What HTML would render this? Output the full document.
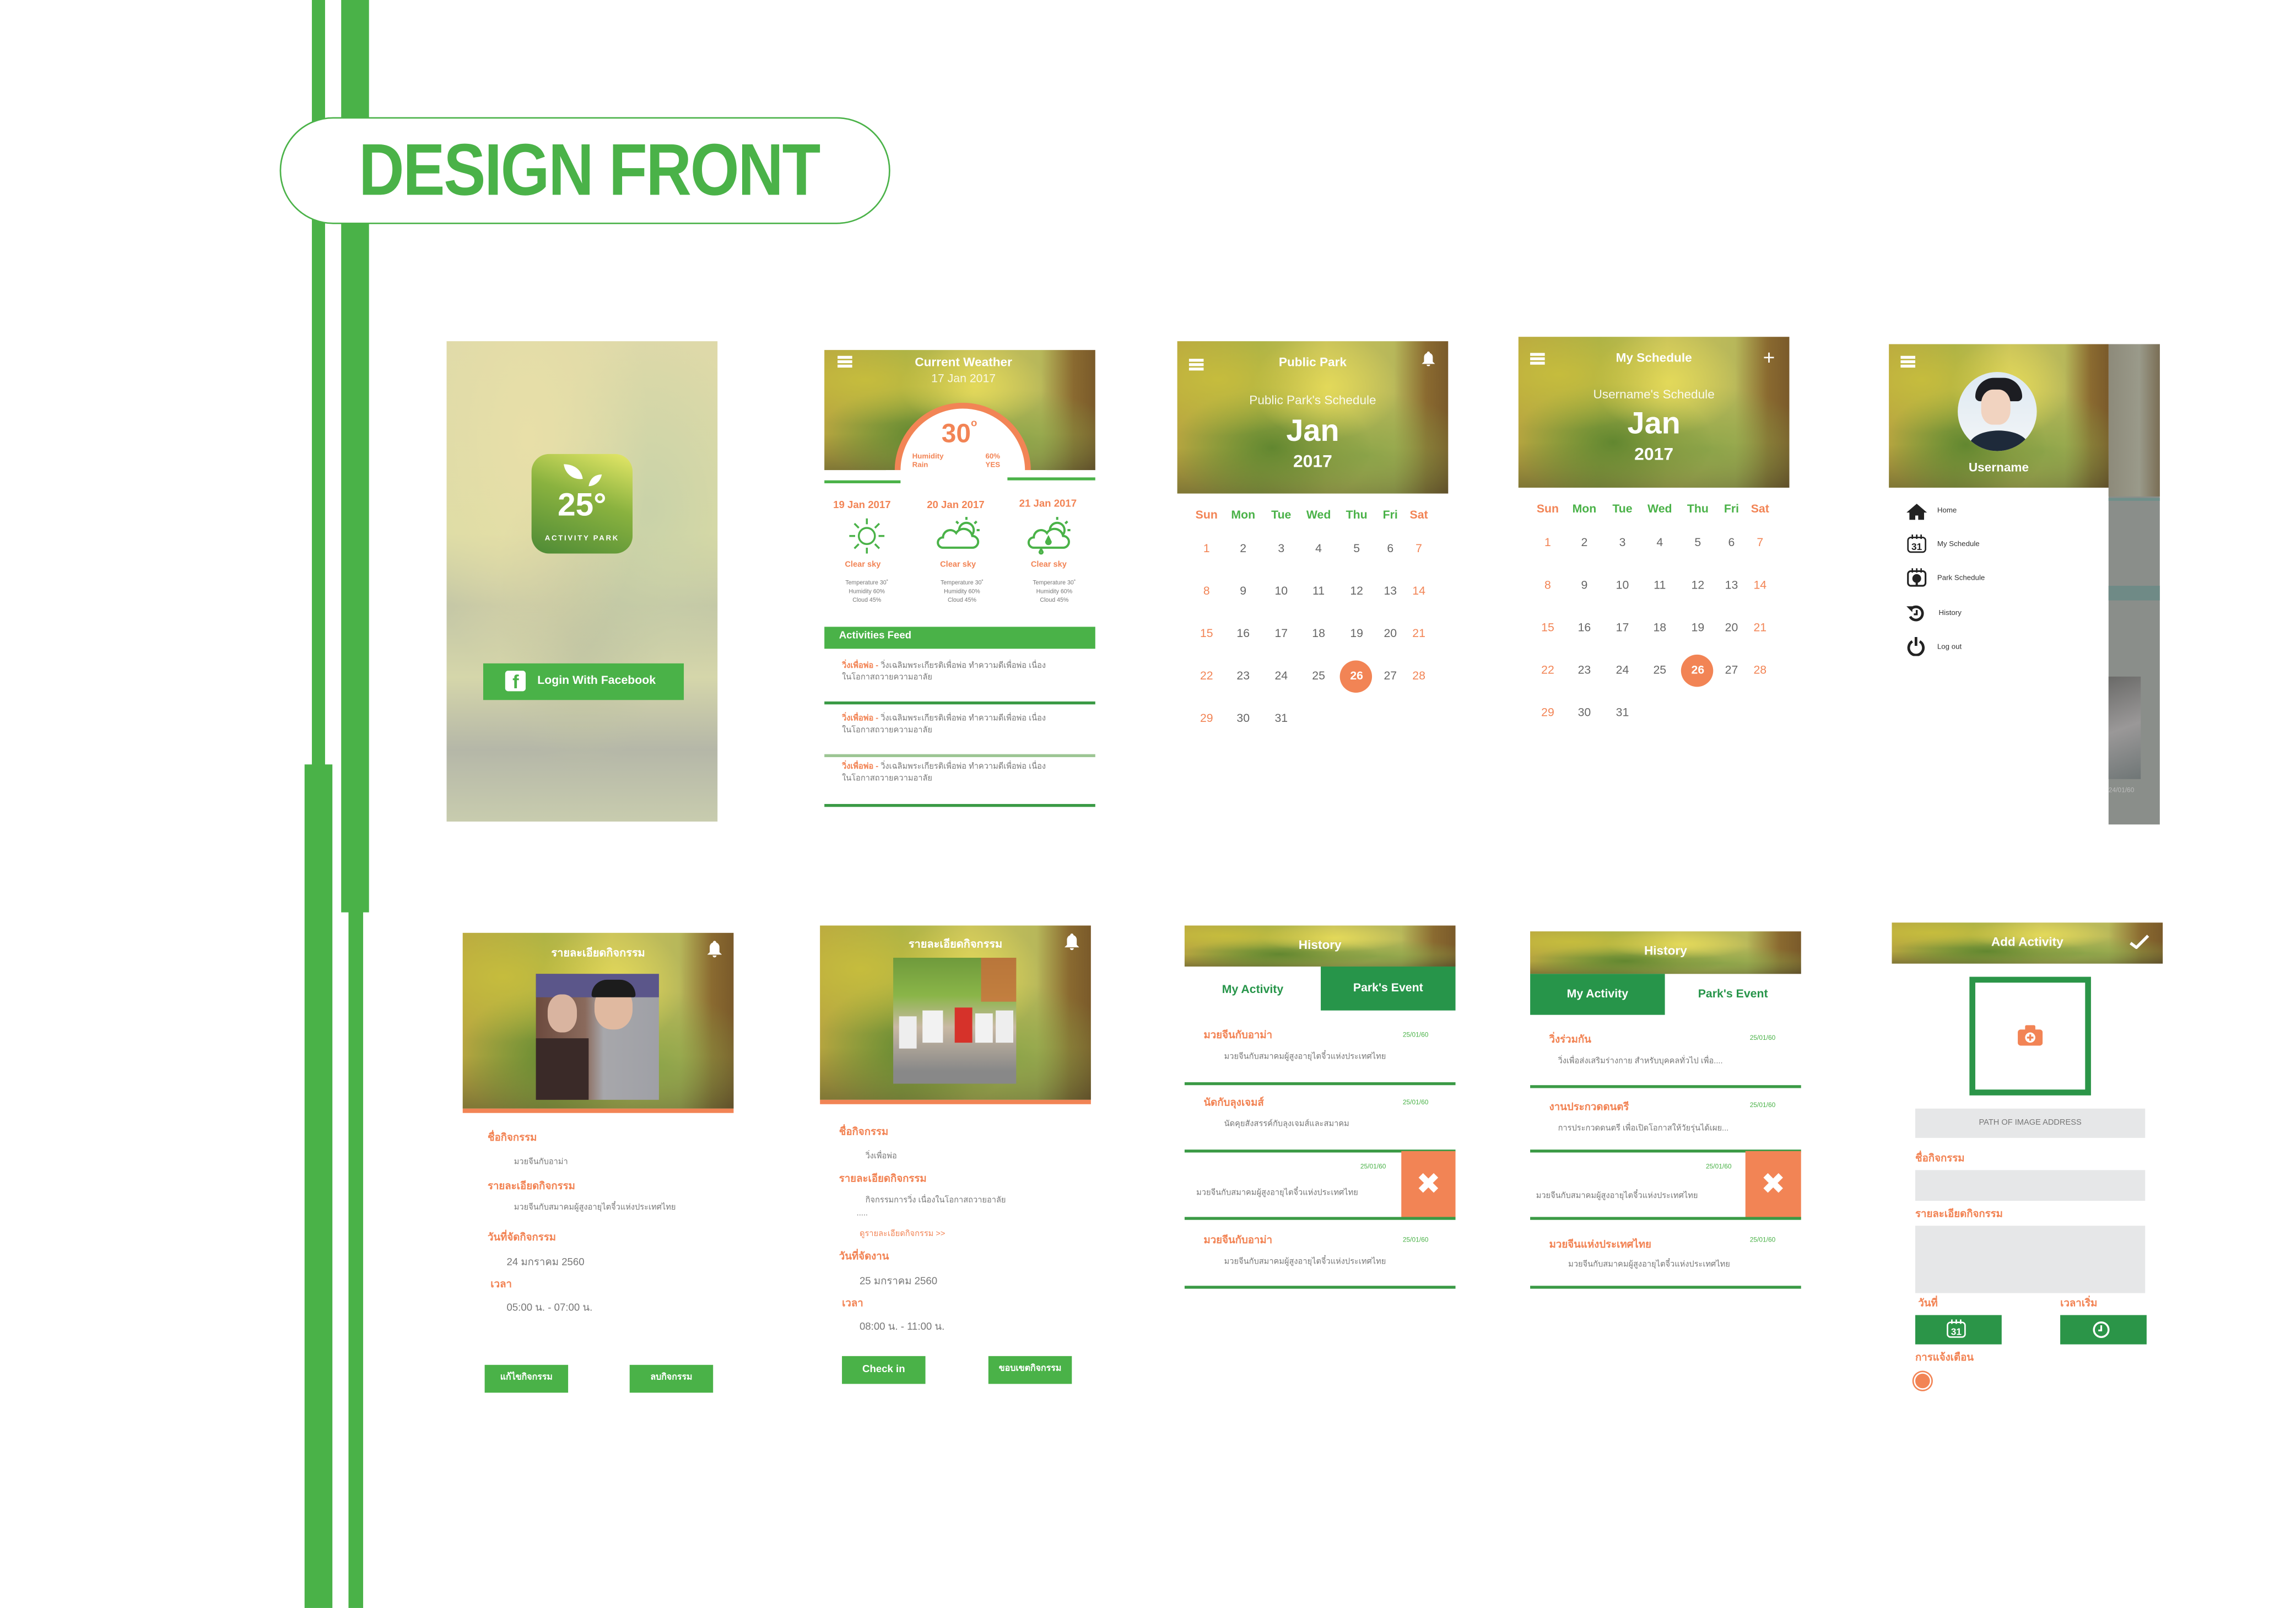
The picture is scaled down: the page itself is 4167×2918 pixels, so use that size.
<!DOCTYPE html>
<html><head><meta charset="utf-8">
<style>
*{margin:0;padding:0;box-sizing:border-box}
html,body{width:4167px;height:2917px;overflow:hidden;background:#fff}
#w{position:absolute;left:0;top:0;width:1568px;height:1098px;transform:scale(2.6575);transform-origin:0 0;font-family:"Liberation Sans","DejaVu Sans",sans-serif}
.a{position:absolute}
.g{background:#4ab248}
.ph{background:
 radial-gradient(ellipse at 15% 25%,rgba(200,190,60,.9) 0,transparent 35%),
 radial-gradient(ellipse at 55% 30%,rgba(230,220,90,.9) 0,transparent 35%),
 radial-gradient(ellipse at 35% 70%,rgba(90,130,45,.9) 0,transparent 40%),
 radial-gradient(ellipse at 70% 75%,rgba(130,160,70,.8) 0,transparent 40%),
 linear-gradient(180deg,rgba(0,0,0,0) 70%,rgba(60,60,40,.45) 100%),
 linear-gradient(90deg,#b9a640,#a7b048 30%,#c9c25a 55%,#b7b75a 80%,#8a6a30 92%,#7a5a2a);}
.t{color:#fff;font-weight:bold;text-align:center;white-space:nowrap}
.o{color:#f28455}
.lbl{color:#f28455;font-weight:bold;font-size:7px;white-space:nowrap}
.gr{color:#777;font-size:5.5px;white-space:nowrap}
.cal{display:flex;font-size:8px;text-align:center;color:#666}
.cal span{display:block}
.btn{background:#4ab248;color:#fff;font-weight:bold;font-size:6px;text-align:center}
.dv{height:1.5px;background:#3a9a45}
</style></head><body><div id="w">

<!-- decorative bars -->
<div class="a g" style="left:213px;top:0;width:9px;height:523px"></div>
<div class="a g" style="left:208px;top:522px;width:19px;height:576px"></div>
<div class="a g" style="left:233px;top:0;width:19px;height:623px"></div>
<div class="a g" style="left:238px;top:622px;width:10px;height:476px"></div>
<div class="a" style="left:191px;top:80px;width:417px;height:73px;border:1.5px solid #4ab248;border-radius:37px;background:#fff"></div>
<div class="a" style="left:245px;top:88px;font-size:50px;color:#4ab248;font-weight:bold;letter-spacing:-1px;line-height:56px;transform:scaleX(.86);transform-origin:0 0">DESIGN FRONT</div>

<!-- 1 LOGIN -->
<div class="a" style="left:305px;top:233px;width:185px;height:328px;background:
 radial-gradient(ellipse at 30% 20%,#e8dfa8 0,transparent 45%),
 radial-gradient(ellipse at 75% 35%,#c9d2a8 0,transparent 40%),
 radial-gradient(ellipse at 50% 55%,#bfc3a2 0,transparent 45%),
 linear-gradient(180deg,#ded9a9 0,#dcdca5 40%,#c3c6a6 55%,#d5d6aa 70%,#b5b7a8 85%,#c8ccae 100%)"></div>
<div class="a" style="left:363px;top:310px;width:69px;height:68px;border-radius:12px;background:linear-gradient(20deg,#4d8a36,#8ab23f 55%,#e6e868)"></div>
<svg class="a" style="left:383px;top:315px" width="30" height="20" viewBox="0 0 30 20"><path d="M2 2c6 0 12 3 13 10-6 1-12-3-13-10z" fill="#fff"/><path d="M28 9c-4 0-8 2-9 8 4 0 8-3 9-8z" fill="#fff"/></svg>
<div class="a t" style="left:363px;top:333px;width:69px;font-size:22px;line-height:24px">25°</div>
<div class="a t" style="left:363px;top:365px;width:69px;font-size:5px;letter-spacing:1px">ACTIVITY PARK</div>
<div class="a g" style="left:330px;top:453px;width:137px;height:25px"></div>
<div class="a" style="left:345px;top:458px;width:14px;height:14px;background:#fff;border-radius:2px"></div>
<div class="a" style="left:350px;top:459px;font-size:13px;font-weight:bold;color:#4ab248;line-height:14px">f</div>
<div class="a t" style="left:367px;top:460px;font-size:8px">Login With Facebook</div>

<!-- 2 WEATHER -->
<div class="a ph" style="left:563px;top:239px;width:185px;height:82px"></div>
<div class="a" style="left:572px;top:243px;width:10px;height:1.5px;background:#fff;box-shadow:0 3px #fff,0 6px #fff"></div>
<div class="a t" style="left:563px;top:242px;width:190px;font-size:8.5px">Current Weather</div>
<div class="a t" style="left:563px;top:254px;width:190px;font-size:8px;font-weight:normal;opacity:.85">17 Jan 2017</div>
<div class="a" style="left:611px;top:275px;width:93px;height:93px;border-radius:50%;border:4.5px solid #f28455;background:#fff;clip-path:inset(0 0 45% 0)"></div>
<div class="a" style="left:605px;top:321px;width:110px;height:12px;background:#fff"></div>
<div class="a o" style="left:643px;top:286px;font-size:18px;font-weight:bold">30<span style="font-size:7px;vertical-align:top">o</span></div>
<div class="a o" style="left:623px;top:309px;font-size:5px;font-weight:bold;line-height:6px">Humidity<br>Rain</div>
<div class="a o" style="left:673px;top:309px;font-size:5px;font-weight:bold;line-height:6px">60%<br>YES</div>
<div class="a g" style="left:563px;top:328px;width:52px;height:2px"></div>
<div class="a g" style="left:688px;top:326px;width:60px;height:2px"></div>
<div class="a o" style="left:569px;top:342px;font-size:7px;font-weight:bold">19 Jan 2017</div>
<div class="a o" style="left:633px;top:342px;font-size:7px;font-weight:bold">20 Jan 2017</div>
<div class="a o" style="left:696px;top:341px;font-size:7px;font-weight:bold">21 Jan 2017</div>
<svg class="a" style="left:579px;top:353px" width="26" height="26" viewBox="0 0 26 26" fill="none" stroke="#4ab248" stroke-width="1.3"><circle cx="13" cy="13" r="5.5"/><path d="M13 1v4M13 21v4M1 13h4M21 13h4M4.5 4.5l3 3M18.5 18.5l3 3M4.5 21.5l3-3M18.5 7.5l3-3"/></svg>
<svg class="a" style="left:638px;top:352px" width="36" height="26" viewBox="0 0 36 26" fill="none" stroke="#4ab248" stroke-width="1.5"><circle cx="22" cy="10" r="5"/><path d="M22 1v2M29 4l-1.5 1.5M31 10h-2M15 4l1.5 1.5"/><path d="M6 22h20a4 4 0 0 0 0-8 6 6 0 0 0-11-2 5 5 0 0 0-9 3 3.5 3.5 0 0 0 0 7z" fill="#fff"/></svg>
<svg class="a" style="left:700px;top:352px" width="36" height="30" viewBox="0 0 36 30" fill="none" stroke="#4ab248" stroke-width="1.5"><circle cx="22" cy="10" r="5"/><path d="M22 1v2M29 4l-1.5 1.5M31 10h-2"/><path d="M6 22h20a4 4 0 0 0 0-8 6 6 0 0 0-11-2 5 5 0 0 0-9 3 3.5 3.5 0 0 0 0 7z" fill="#fff"/><path d="M16 15l-1.5 3a1.5 1.5 0 0 0 3 0z" fill="#4ab248"/><path d="M11 23l-1 2a1 1 0 0 0 2 0z"/></svg>
<div class="a o" style="left:577px;top:383px;font-size:5.5px;font-weight:bold">Clear sky</div>
<div class="a o" style="left:642px;top:383px;font-size:5.5px;font-weight:bold">Clear sky</div>
<div class="a o" style="left:704px;top:383px;font-size:5.5px;font-weight:bold">Clear sky</div>
<div class="a gr" style="left:572px;top:395px;font-size:4px;line-height:6px;text-align:center;width:40px">Temperature 30˚<br>Humidity 60%<br>Cloud 45%</div>
<div class="a gr" style="left:637px;top:395px;font-size:4px;line-height:6px;text-align:center;width:40px">Temperature 30˚<br>Humidity 60%<br>Cloud 45%</div>
<div class="a gr" style="left:700px;top:395px;font-size:4px;line-height:6px;text-align:center;width:40px">Temperature 30˚<br>Humidity 60%<br>Cloud 45%</div>
<div class="a g" style="left:563px;top:428px;width:185px;height:15px"></div>
<div class="a t" style="left:573px;top:431px;font-size:7px">Activities Feed</div>
<div class="a gr" style="left:575px;top:451px;line-height:8px;font-size:5.5px"><b class="o">วิ่งเพื่อพ่อ -</b> วิ่งเฉลิมพระเกียรติเพื่อพ่อ ทำความดีเพื่อพ่อ เนื่อง<br>ในโอกาสถวายความอาลัย</div>
<div class="a dv" style="left:563px;top:479px;width:185px"></div>
<div class="a gr" style="left:575px;top:487px;line-height:8px;font-size:5.5px"><b class="o">วิ่งเพื่อพ่อ -</b> วิ่งเฉลิมพระเกียรติเพื่อพ่อ ทำความดีเพื่อพ่อ เนื่อง<br>ในโอกาสถวายความอาลัย</div>
<div class="a dv" style="left:563px;top:515px;width:185px;background:#9cc593"></div>
<div class="a gr" style="left:575px;top:520px;line-height:8px;font-size:5.5px"><b class="o">วิ่งเพื่อพ่อ -</b> วิ่งเฉลิมพระเกียรติเพื่อพ่อ ทำความดีเพื่อพ่อ เนื่อง<br>ในโอกาสถวายความอาลัย</div>
<div class="a dv" style="left:563px;top:549px;width:185px"></div>

<!-- 3 PUBLIC PARK CALENDAR -->
<div class="a ph" style="left:804px;top:233px;width:185px;height:104px"></div>
<div class="a" style="left:812px;top:245px;width:10px;height:1.5px;background:#fff;box-shadow:0 3px #fff,0 6px #fff"></div>
<svg class="a" style="left:971px;top:240px" width="9" height="10" viewBox="0 0 9 10"><path d="M4.5 0a1 1 0 0 1 1 1 3 3 0 0 1 2 3v3l1.5 1.5H0L1.5 7V4a3 3 0 0 1 2-3 1 1 0 0 1 1-1zM3.3 9h2.4a1.2 1.2 0 0 1-2.4 0z" fill="#fff"/></svg>
<div class="a t" style="left:804px;top:242px;width:185px;font-size:8.5px">Public Park</div>
<div class="a t" style="left:804px;top:268px;width:185px;font-size:8.5px;font-weight:normal;opacity:.9">Public Park's Schedule</div>
<div class="a t" style="left:804px;top:283px;width:185px;font-size:21px">Jan</div>
<div class="a t" style="left:804px;top:308px;width:185px;font-size:12px">2017</div>
<div class="a" style="left:812px;top:347px">
<div class="cal" style="font-weight:bold;font-size:8px;height:23px"><span style="width:24px;color:#f28455">Sun</span><span style="width:26px;color:#4ab248">Mon</span><span style="width:26px;color:#4ab248">Tue</span><span style="width:25px;color:#4ab248">Wed</span><span style="width:27px;color:#4ab248">Thu</span><span style="width:19px;color:#4ab248">Fri</span><span style="width:20px;color:#f28455">Sat</span></div>
<div class="cal" style="height:29px"><span class="o" style="width:24px">1</span><span style="width:26px">2</span><span style="width:26px">3</span><span style="width:25px">4</span><span style="width:27px">5</span><span style="width:19px">6</span><span class="o" style="width:20px">7</span></div>
<div class="cal" style="height:29px"><span class="o" style="width:24px">8</span><span style="width:26px">9</span><span style="width:26px">10</span><span style="width:25px">11</span><span style="width:27px">12</span><span style="width:19px">13</span><span class="o" style="width:20px">14</span></div>
<div class="cal" style="height:29px"><span class="o" style="width:24px">15</span><span style="width:26px">16</span><span style="width:26px">17</span><span style="width:25px">18</span><span style="width:27px">19</span><span style="width:19px">20</span><span class="o" style="width:20px">21</span></div>
<div class="cal" style="height:29px"><span class="o" style="width:24px">22</span><span style="width:26px">23</span><span style="width:26px">24</span><span style="width:25px">25</span><span style="width:27px;position:relative"><i style="position:absolute;left:2px;top:-6px;width:22px;height:22px;border-radius:50%;background:#f28455"></i><b style="position:relative;color:#fff">26</b></span><span style="width:19px">27</span><span class="o" style="width:20px">28</span></div>
<div class="cal" style="height:29px"><span class="o" style="width:24px">29</span><span style="width:26px">30</span><span style="width:26px">31</span></div>
</div>

<!-- 4 MY SCHEDULE -->
<div class="a ph" style="left:1037px;top:230px;width:185px;height:103px"></div>
<div class="a" style="left:1045px;top:241px;width:10px;height:1.5px;background:#fff;box-shadow:0 3px #fff,0 6px #fff"></div>
<div class="a t" style="left:1204px;top:236px;font-size:14px;font-weight:normal">+</div>
<div class="a t" style="left:1037px;top:239px;width:185px;font-size:8.5px">My Schedule</div>
<div class="a t" style="left:1037px;top:264px;width:185px;font-size:8.5px;font-weight:normal;opacity:.9">Username's Schedule</div>
<div class="a t" style="left:1037px;top:278px;width:185px;font-size:21px">Jan</div>
<div class="a t" style="left:1037px;top:303px;width:185px;font-size:12px">2017</div>
<div class="a" style="left:1045px;top:343px">
<div class="cal" style="font-weight:bold;font-size:8px;height:23px"><span style="width:24px;color:#f28455">Sun</span><span style="width:26px;color:#4ab248">Mon</span><span style="width:26px;color:#4ab248">Tue</span><span style="width:25px;color:#4ab248">Wed</span><span style="width:27px;color:#4ab248">Thu</span><span style="width:19px;color:#4ab248">Fri</span><span style="width:20px;color:#f28455">Sat</span></div>
<div class="cal" style="height:29px"><span class="o" style="width:24px">1</span><span style="width:26px">2</span><span style="width:26px">3</span><span style="width:25px">4</span><span style="width:27px">5</span><span style="width:19px">6</span><span class="o" style="width:20px">7</span></div>
<div class="cal" style="height:29px"><span class="o" style="width:24px">8</span><span style="width:26px">9</span><span style="width:26px">10</span><span style="width:25px">11</span><span style="width:27px">12</span><span style="width:19px">13</span><span class="o" style="width:20px">14</span></div>
<div class="cal" style="height:29px"><span class="o" style="width:24px">15</span><span style="width:26px">16</span><span style="width:26px">17</span><span style="width:25px">18</span><span style="width:27px">19</span><span style="width:19px">20</span><span class="o" style="width:20px">21</span></div>
<div class="cal" style="height:29px"><span class="o" style="width:24px">22</span><span style="width:26px">23</span><span style="width:26px">24</span><span style="width:25px">25</span><span style="width:27px;position:relative"><i style="position:absolute;left:2px;top:-6px;width:22px;height:22px;border-radius:50%;background:#f28455"></i><b style="position:relative;color:#fff">26</b></span><span style="width:19px">27</span><span class="o" style="width:20px">28</span></div>
<div class="cal" style="height:29px"><span class="o" style="width:24px">29</span><span style="width:26px">30</span><span style="width:26px">31</span></div>
</div>

<!-- 5 MENU -->
<div class="a" style="left:1440px;top:235px;width:35px;height:328px;background:#8a8e8a"></div>
<div class="a" style="left:1440px;top:235px;width:35px;height:104px;background:linear-gradient(90deg,#8d8a7a,#9a9a8a 60%,#7a6e55)"></div>
<div class="a" style="left:1440px;top:340px;width:35px;height:2px;background:#6f8f8a"></div>
<div class="a" style="left:1440px;top:400px;width:35px;height:10px;background:#6f8a86"></div>
<div class="a" style="left:1440px;top:462px;width:22px;height:70px;background:linear-gradient(160deg,#6a6a68,#9a9898 50%,#6f7676)"></div>
<div class="a" style="left:1440px;top:537px;font-size:4.5px;color:#bbb">24/01/60</div>
<div class="a ph" style="left:1290px;top:235px;width:150px;height:98px"></div>
<div class="a" style="left:1298px;top:243px;width:10px;height:1.5px;background:#fff;box-shadow:0 3px #fff,0 6px #fff"></div>
<div class="a" style="left:1337px;top:254px;width:54px;height:54px;border-radius:50%;overflow:hidden;background:linear-gradient(180deg,#dde9f2,#f3f5f7)">
 <div class="a" style="left:12px;top:4px;width:32px;height:16px;border-radius:16px 16px 4px 4px;background:#1c1d22"></div>
 <div class="a" style="left:16px;top:12px;width:20px;height:24px;border-radius:40%;background:#f1d3c0"></div>
 <div class="a" style="left:8px;top:40px;width:40px;height:20px;border-radius:50%;background:#1e2a3a"></div>
</div>
<div class="a t" style="left:1290px;top:314px;width:150px;font-size:8.5px">Username</div>
<svg class="a" style="left:1302px;top:344px" width="14" height="11" viewBox="0 0 14 11"><path d="M7 0L0 6h2v5h4V8h2v3h4V6h2z" fill="#222"/></svg>
<div class="a" style="left:1323px;top:346px;font-size:5px;color:#333">Home</div>
<svg class="a" style="left:1302px;top:365px" width="14" height="13" viewBox="0 0 14 13"><rect x="1" y="2" width="12" height="10" rx="2" fill="none" stroke="#222"/><path d="M4 0v3M7 0v3M10 0v3" stroke="#222"/><text x="7" y="10.5" font-size="6.5" font-weight="bold" text-anchor="middle" fill="#222" font-family="Liberation Sans">31</text></svg>
<div class="a" style="left:1323px;top:369px;font-size:5px;color:#333">My Schedule</div>
<svg class="a" style="left:1302px;top:388px" width="14" height="13" viewBox="0 0 14 13"><rect x="1" y="2" width="12" height="10" rx="2" fill="none" stroke="#222" stroke-width="1.2"/><path d="M4 0v3M7 0v3M10 0v3" stroke="#222"/><circle cx="7" cy="7" r="3" fill="#222"/><path d="M7 9v3" stroke="#222" stroke-width="1.5"/></svg>
<div class="a" style="left:1323px;top:392px;font-size:5px;color:#333">Park Schedule</div>
<svg class="a" style="left:1302px;top:413px" width="13" height="12" viewBox="0 0 13 12"><path d="M3 3a4.5 4.5 0 1 1-.5 5" fill="none" stroke="#222" stroke-width="1.8"/><path d="M0 1l4 0 0 4z" fill="#222"/><path d="M7 3.5v3h-2" stroke="#222" stroke-width="1.3" fill="none"/></svg>
<div class="a" style="left:1324px;top:416px;font-size:5px;color:#333">History</div>
<svg class="a" style="left:1302px;top:435px" width="13" height="13" viewBox="0 0 13 13"><path d="M4 3a5 5 0 1 0 5 0" fill="none" stroke="#222" stroke-width="1.8"/><path d="M6.5 0v6" stroke="#222" stroke-width="1.8"/></svg>
<div class="a" style="left:1323px;top:439px;font-size:5px;color:#333">Log out</div>

<!-- 6 DETAIL (elders) -->
<div class="a ph" style="left:316px;top:637px;width:185px;height:120px"></div>
<div class="a" style="left:316px;top:757px;width:185px;height:3px;background:#f28455"></div>
<div class="a t" style="left:316px;top:645px;width:185px;font-size:7.5px">รายละเอียดกิจกรรม</div>
<svg class="a" style="left:483px;top:642px" width="10" height="12" viewBox="0 0 9 10"><path d="M4.5 0a1 1 0 0 1 1 1 3 3 0 0 1 2 3v3l1.5 1.5H0L1.5 7V4a3 3 0 0 1 2-3 1 1 0 0 1 1-1zM3.3 9h2.4a1.2 1.2 0 0 1-2.4 0z" fill="#fff"/></svg>
<div class="a" style="left:366px;top:665px;width:84px;height:86px;background:linear-gradient(90deg,#6c4a3e,#8a6a5c 40%,#a7a7ab 55%,#9fa0a6)">
 <div class="a" style="left:0;top:0;width:84px;height:16px;background:#5b568a"></div>
 <div class="a" style="left:8px;top:14px;width:20px;height:26px;border-radius:45%;background:#d9b4a0"></div>
 <div class="a" style="left:40px;top:8px;width:26px;height:30px;border-radius:45%;background:#e0b9a0"></div>
 <div class="a" style="left:38px;top:4px;width:30px;height:12px;border-radius:14px 14px 2px 2px;background:#1c1c1c"></div>
 <div class="a" style="left:0;top:44px;width:36px;height:42px;background:#3a2a28"></div>
</div>
<div class="a lbl" style="left:333px;top:772px">ชื่อกิจกรรม</div>
<div class="a gr" style="left:351px;top:790px">มวยจีนกับอาม่า</div>
<div class="a lbl" style="left:333px;top:805px">รายละเอียดกิจกรรม</div>
<div class="a gr" style="left:351px;top:821px">มวยจีนกับสมาคมผู้สูงอายุไตจี๋วแห่งประเทศไทย</div>
<div class="a lbl" style="left:333px;top:840px">วันที่จัดกิจกรรม</div>
<div class="a gr" style="left:346px;top:857px;font-size:7px">24 มกราคม 2560</div>
<div class="a lbl" style="left:335px;top:872px">เวลา</div>
<div class="a gr" style="left:346px;top:888px;font-size:7px">05:00 น. - 07:00 น.</div>
<div class="a btn" style="left:331px;top:932px;width:57px;height:19px;line-height:19px">แก้ไขกิจกรรม</div>
<div class="a btn" style="left:430px;top:932px;width:57px;height:19px;line-height:19px">ลบกิจกรรม</div>

<!-- 7 DETAIL (run) -->
<div class="a ph" style="left:560px;top:632px;width:185px;height:119px"></div>
<div class="a" style="left:560px;top:751px;width:185px;height:3px;background:#f28455"></div>
<div class="a t" style="left:560px;top:639px;width:185px;font-size:7.5px">รายละเอียดกิจกรรม</div>
<svg class="a" style="left:727px;top:637px" width="10" height="12" viewBox="0 0 9 10"><path d="M4.5 0a1 1 0 0 1 1 1 3 3 0 0 1 2 3v3l1.5 1.5H0L1.5 7V4a3 3 0 0 1 2-3 1 1 0 0 1 1-1zM3.3 9h2.4a1.2 1.2 0 0 1-2.4 0z" fill="#fff"/></svg>
<div class="a" style="left:610px;top:654px;width:84px;height:86px;background:linear-gradient(180deg,#6f9a3c,#8ab548 30%,#c9b9a4 55%,#888 90%)">
 <div class="a" style="left:60px;top:0;width:24px;height:30px;background:#d8663a;opacity:.7"></div>
 <div class="a" style="left:20px;top:36px;width:14px;height:22px;background:#f2f2f2"></div>
 <div class="a" style="left:42px;top:34px;width:12px;height:24px;background:#d6322a"></div>
 <div class="a" style="left:56px;top:38px;width:12px;height:20px;background:#f2f2f2"></div>
 <div class="a" style="left:70px;top:36px;width:12px;height:22px;background:#eee"></div>
 <div class="a" style="left:4px;top:40px;width:12px;height:22px;background:#eee"></div>
</div>
<div class="a lbl" style="left:573px;top:768px">ชื่อกิจกรรม</div>
<div class="a gr" style="left:591px;top:786px">วิ่งเพื่อพ่อ</div>
<div class="a lbl" style="left:573px;top:800px">รายละเอียดกิจกรรม</div>
<div class="a gr" style="left:591px;top:816px">กิจกรรมการวิ่ง เนื่องในโอกาสถวายอาลัย</div>
<div class="a gr" style="left:585px;top:826px">.....</div>
<div class="a o" style="left:587px;top:839px;font-size:5.5px">ดูรายละเอียดกิจกรรม &gt;&gt;</div>
<div class="a lbl" style="left:573px;top:853px">วันที่จัดงาน</div>
<div class="a gr" style="left:587px;top:870px;font-size:7px">25 มกราคม 2560</div>
<div class="a lbl" style="left:575px;top:885px">เวลา</div>
<div class="a gr" style="left:587px;top:901px;font-size:7px">08:00 น. - 11:00 น.</div>
<div class="a btn" style="left:575px;top:926px;width:57px;height:19px;line-height:19px;font-size:7px">Check in</div>
<div class="a btn" style="left:675px;top:926px;width:57px;height:19px;line-height:19px">ขอบเขตกิจกรรม</div>

<!-- 8 HISTORY park's event -->
<div class="a ph" style="left:809px;top:632px;width:185px;height:28px"></div>
<div class="a t" style="left:809px;top:640px;width:185px;font-size:8.5px">History</div>
<div class="a" style="left:809px;top:660px;width:93px;height:30px;color:#27954a;font-weight:bold;font-size:8px;text-align:center;line-height:32px">My Activity</div>
<div class="a" style="left:902px;top:660px;width:92px;height:30px;background:#27954a;color:#fff;font-weight:bold;font-size:8px;text-align:center;line-height:30px">Park's Event</div>
<div class="a lbl" style="left:822px;top:702px">มวยจีนกับอาม่า</div>
<div class="a" style="left:958px;top:704px;font-size:4.5px;color:#4ab248">25/01/60</div>
<div class="a gr" style="left:836px;top:718px">มวยจีนกับสมาคมผู้สูงอายุไตจี๋วแห่งประเทศไทย</div>
<div class="a dv" style="left:809px;top:739px;width:185px;height:2px"></div>
<div class="a lbl" style="left:822px;top:748px">นัดกับลุงเจมส์</div>
<div class="a" style="left:958px;top:750px;font-size:4.5px;color:#4ab248">25/01/60</div>
<div class="a gr" style="left:836px;top:764px">นัดคุยสังสรรค์กับลุงเจมส์และสมาคม</div>
<div class="a dv" style="left:809px;top:785px;width:185px"></div>
<div class="a" style="left:929px;top:794px;font-size:4.5px;color:#4ab248">25/01/60</div>
<div class="a gr" style="left:817px;top:811px">มวยจีนกับสมาคมผู้สูงอายุไตจี๋วแห่งประเทศไทย</div>
<div class="a" style="left:957px;top:786px;width:37px;height:46px;background:#f28455;color:#fff;font-weight:bold;font-size:20px;text-align:center;line-height:46px">✖</div>
<div class="a dv" style="left:809px;top:831px;width:185px;height:2px"></div>
<div class="a lbl" style="left:822px;top:842px">มวยจีนกับอาม่า</div>
<div class="a" style="left:958px;top:844px;font-size:4.5px;color:#4ab248">25/01/60</div>
<div class="a gr" style="left:836px;top:858px">มวยจีนกับสมาคมผู้สูงอายุไตจี๋วแห่งประเทศไทย</div>
<div class="a dv" style="left:809px;top:878px;width:185px"></div>

<!-- 9 HISTORY my activity -->
<div class="a ph" style="left:1045px;top:636px;width:185px;height:29px"></div>
<div class="a t" style="left:1045px;top:644px;width:185px;font-size:8.5px">History</div>
<div class="a" style="left:1045px;top:665px;width:92px;height:28px;background:#27954a;color:#fff;font-weight:bold;font-size:8px;text-align:center;line-height:28px">My Activity</div>
<div class="a" style="left:1137px;top:665px;width:93px;height:28px;color:#27954a;font-weight:bold;font-size:8px;text-align:center;line-height:28px">Park's Event</div>
<div class="a lbl" style="left:1058px;top:705px">วิ่งร่วมกัน</div>
<div class="a" style="left:1195px;top:706px;font-size:4.5px;color:#4ab248">25/01/60</div>
<div class="a gr" style="left:1064px;top:721px">วิ่งเพื่อส่งเสริมร่างกาย สำหรับบุคคลทั่วไป เพื่อ....</div>
<div class="a dv" style="left:1045px;top:741px;width:185px;height:2px"></div>
<div class="a lbl" style="left:1058px;top:751px">งานประกวดดนตรี</div>
<div class="a" style="left:1195px;top:752px;font-size:4.5px;color:#4ab248">25/01/60</div>
<div class="a gr" style="left:1064px;top:767px">การประกวดดนตรี เพื่อเปิดโอกาสให้วัยรุ่นได้เผย...</div>
<div class="a dv" style="left:1045px;top:785px;width:185px"></div>
<div class="a" style="left:1165px;top:794px;font-size:4.5px;color:#4ab248">25/01/60</div>
<div class="a gr" style="left:1049px;top:813px">มวยจีนกับสมาคมผู้สูงอายุไตจี๋วแห่งประเทศไทย</div>
<div class="a" style="left:1192px;top:786px;width:38px;height:46px;background:#f28455;color:#fff;font-weight:bold;font-size:20px;text-align:center;line-height:46px">✖</div>
<div class="a dv" style="left:1045px;top:831px;width:185px;height:2px"></div>
<div class="a lbl" style="left:1058px;top:845px">มวยจีนแห่งประเทศไทย</div>
<div class="a" style="left:1195px;top:844px;font-size:4.5px;color:#4ab248">25/01/60</div>
<div class="a gr" style="left:1071px;top:860px">มวยจีนกับสมาคมผู้สูงอายุไตจี๋วแห่งประเทศไทย</div>
<div class="a dv" style="left:1045px;top:878px;width:185px"></div>

<!-- 10 ADD ACTIVITY -->
<div class="a ph" style="left:1292px;top:630px;width:185px;height:28px"></div>
<div class="a t" style="left:1292px;top:638px;width:185px;font-size:8.5px">Add Activity</div>
<svg class="a" style="left:1454px;top:638px" width="14" height="10" viewBox="0 0 14 10"><path d="M1 6l4 3 8-8" fill="none" stroke="#fff" stroke-width="2"/></svg>
<div class="a" style="left:1345px;top:667px;width:83px;height:81px;border:4px solid #2b9548"></div>
<svg class="a" style="left:1378px;top:700px" width="17" height="14" viewBox="0 0 17 14"><rect x="0" y="3" width="17" height="11" rx="2" fill="#f28455"/><rect x="5" y="0" width="7" height="4" rx="1" fill="#f28455"/><circle cx="8.5" cy="8.5" r="3.5" fill="#fff"/><path d="M8.5 6.3v4.4M6.3 8.5h4.4" stroke="#f28455" stroke-width="1.3"/></svg>
<div class="a" style="left:1308px;top:757px;width:157px;height:20px;background:#e6e7e8;color:#777;font-size:5.5px;text-align:center;line-height:20px">PATH OF IMAGE ADDRESS</div>
<div class="a lbl" style="left:1308px;top:786px">ชื่อกิจกรรม</div>
<div class="a" style="left:1308px;top:799px;width:157px;height:21px;background:#e6e7e8"></div>
<div class="a lbl" style="left:1308px;top:824px">รายละเอียดกิจกรรม</div>
<div class="a" style="left:1308px;top:837px;width:157px;height:46px;background:#e6e7e8"></div>
<div class="a lbl" style="left:1310px;top:885px">วันที่</div>
<div class="a lbl" style="left:1407px;top:885px">เวลาเริ่ม</div>
<div class="a" style="left:1308px;top:898px;width:59px;height:20px;background:#2b9548"></div>
<svg class="a" style="left:1329px;top:901px" width="14" height="13" viewBox="0 0 14 13"><rect x="1" y="2" width="12" height="10" rx="2" fill="none" stroke="#fff"/><path d="M4 0v3M7 0v3M10 0v3" stroke="#fff"/><text x="7" y="10.5" font-size="6.5" font-weight="bold" text-anchor="middle" fill="#fff" font-family="Liberation Sans">31</text></svg>
<div class="a" style="left:1407px;top:898px;width:59px;height:20px;background:#2b9548"></div>
<svg class="a" style="left:1429px;top:902px" width="12" height="12" viewBox="0 0 12 12"><circle cx="6" cy="6" r="5" fill="none" stroke="#fff" stroke-width="1.3"/><path d="M6 3v3.5H4" fill="none" stroke="#fff" stroke-width="1.2"/></svg>
<div class="a lbl" style="left:1308px;top:922px">การแจ้งเตือน</div>
<div class="a" style="left:1307px;top:937px;width:12px;height:12px;border-radius:50%;background:#f28455;border:1.5px solid #fff;box-shadow:0 0 0 1px #f28455"></div>

</div></body></html>
